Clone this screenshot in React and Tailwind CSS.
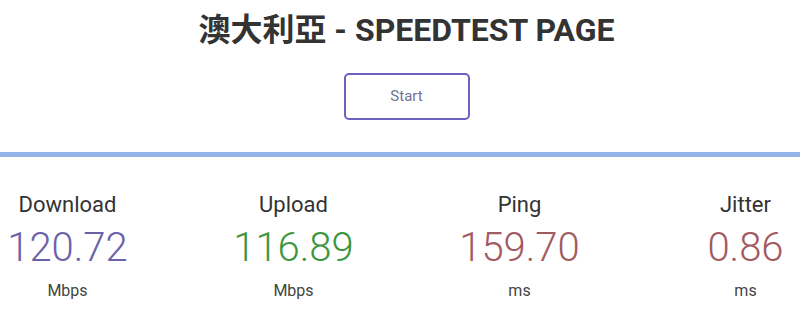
const stats = [
  { label: 'Download', value: '120.72', unit: 'Mbps', color: 'text-[#6a62a8]' },
  { label: 'Upload', value: '116.89', unit: 'Mbps', color: 'text-[#3d963d]' },
  { label: 'Ping', value: '159.70', unit: 'ms', color: 'text-[#a15a5f]' },
  { label: 'Jitter', value: '0.86', unit: 'ms', color: 'text-[#a15a5f]' },
]

export default function App() {
  return (
    <div className="w-[800px] h-[329px] overflow-hidden bg-white">
      <div className="w-[813px] text-[#333] font-['Roboto','Noto_Sans_CJK_TC',sans-serif]">
        <h1 className="pt-[10px] text-center text-[32px] leading-[40px] font-bold text-[#333]">
          澳大利亞 - SPEEDTEST PAGE
        </h1>

        <div className="flex justify-center mt-[23px]">
          <button className="w-[126px] h-[47px] border-2 border-[#6b62c0] rounded-[5px] text-[15px] text-[#75728f]">
            Start
          </button>
        </div>
      </div>

      <div className="mt-[32px] h-[5px] bg-[#94b3e8]" />

      {/* Results */}
      <div className="w-[813px] flex justify-center mt-[35px] font-['Roboto',sans-serif]">
        <div className="flex shrink-0">
          {stats.map(s => (
            <div key={s.label} className="w-[226px] shrink-0 flex flex-col items-center">
              <div className="text-[22px] leading-[26px] text-[#333]">{s.label}</div>
              <div className={`mt-[6px] text-[40px] leading-[48px] font-light ${s.color}`}>{s.value}</div>
              <div className="mt-[9px] text-[16px] leading-[20px] text-[#444]">{s.unit}</div>
            </div>
          ))}
        </div>
      </div>
    </div>
  )
}
